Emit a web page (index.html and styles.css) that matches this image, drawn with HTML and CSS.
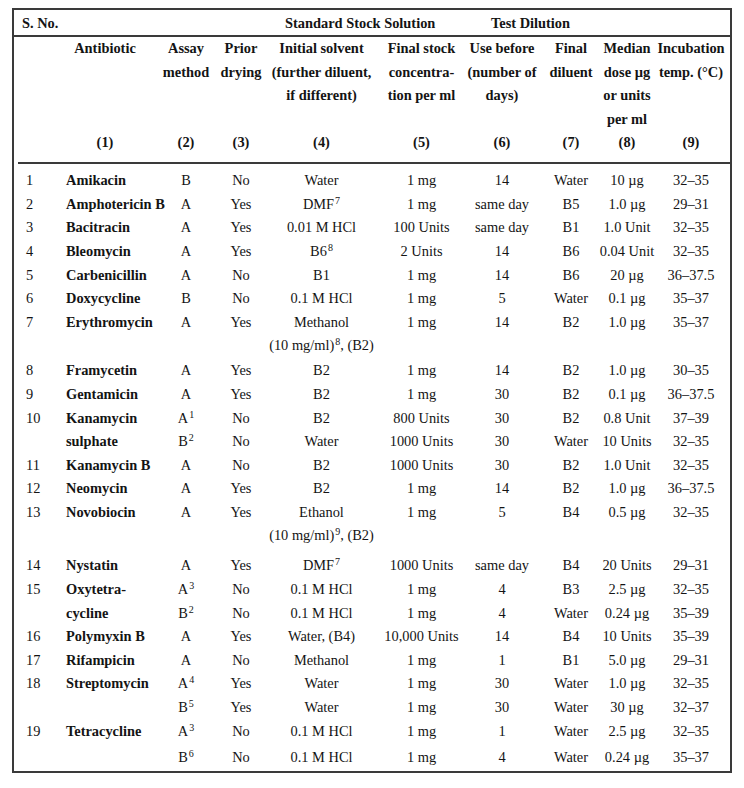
FILE: index.html
```html
<!DOCTYPE html>
<html lang="en">
<head>
<meta charset="utf-8">
<title>Antibiotic assay table</title>
<link rel="stylesheet" href="styles.css">
</head>
<body>
<div class="sheet">
  <div class="cols cap">
    <span class="cap-sno">S. No.</span>
    <span class="cap-std">Standard Stock Solution</span>
    <span class="cap-test">Test Dilution</span>
  </div>
  <div class="cols heads">
    <div class="h"><span></span><span></span></div>
    <div class="h h1"><span>Antibiotic</span><span>(1)</span></div>
    <div class="h"><span>Assay<br>method</span><span>(2)</span></div>
    <div class="h"><span>Prior<br>drying</span><span>(3)</span></div>
    <div class="h"><span>Initial solvent<br>(further diluent,<br>if different)</span><span>(4)</span></div>
    <div class="h"><span>Final stock<br>concentra-<br>tion per ml</span><span>(5)</span></div>
    <div class="h"><span>Use before<br>(number of<br>days)</span><span>(6)</span></div>
    <div class="h"><span>Final<br>diluent</span><span>(7)</span></div>
    <div class="h"><span>Median<br>dose µg<br>or units<br>per ml</span><span>(8)</span></div>
    <div class="h h9"><span>Incubation<br>temp. (°C)</span><span>(9)</span></div>
  </div>
  <div class="rule"></div>
  <div class="rows">
    <div class="cols row"><span class="no">1</span><span class="name">Amikacin</span><span>B</span><span>No</span><span>Water</span><span>1 mg</span><span>14</span><span>Water</span><span>10 µg</span><span class="temp">32–35</span></div>
    <div class="cols row"><span class="no">2</span><span class="name">Amphotericin B</span><span>A</span><span>Yes</span><span>DMF<sup>7</sup></span><span>1 mg</span><span>same day</span><span>B5</span><span>1.0 µg</span><span class="temp">29–31</span></div>
    <div class="cols row"><span class="no">3</span><span class="name">Bacitracin</span><span>A</span><span>Yes</span><span>0.01 M HCl</span><span>100 Units</span><span>same day</span><span>B1</span><span>1.0 Unit</span><span class="temp">32–35</span></div>
    <div class="cols row"><span class="no">4</span><span class="name">Bleomycin</span><span>A</span><span>Yes</span><span>B6<sup>8</sup></span><span>2 Units</span><span>14</span><span>B6</span><span>0.04 Unit</span><span class="temp">32–35</span></div>
    <div class="cols row"><span class="no">5</span><span class="name">Carbenicillin</span><span>A</span><span>No</span><span>B1</span><span>1 mg</span><span>14</span><span>B6</span><span>20 µg</span><span class="temp">36–37.5</span></div>
    <div class="cols row"><span class="no">6</span><span class="name">Doxycycline</span><span>B</span><span>No</span><span>0.1 M HCl</span><span>1 mg</span><span>5</span><span>Water</span><span>0.1 µg</span><span class="temp">35–37</span></div>
    <div class="cols row"><span class="no">7</span><span class="name">Erythromycin</span><span>A</span><span>Yes</span><span>Methanol</span><span>1 mg</span><span>14</span><span>B2</span><span>1.0 µg</span><span class="temp">35–37</span></div>
    <div class="cols row gap-s"><span class="no"></span><span class="name"></span><span></span><span></span><span>(10 mg/ml)<sup>8</sup>, (B2)</span><span></span><span></span><span></span><span></span><span class="temp"></span></div>
    <div class="cols row"><span class="no">8</span><span class="name">Framycetin</span><span>A</span><span>Yes</span><span>B2</span><span>1 mg</span><span>14</span><span>B2</span><span>1.0 µg</span><span class="temp">30–35</span></div>
    <div class="cols row"><span class="no">9</span><span class="name">Gentamicin</span><span>A</span><span>Yes</span><span>B2</span><span>1 mg</span><span>30</span><span>B2</span><span>0.1 µg</span><span class="temp">36–37.5</span></div>
    <div class="cols row"><span class="no">10</span><span class="name">Kanamycin</span><span>A<sup>1</sup></span><span>No</span><span>B2</span><span>800 Units</span><span>30</span><span>B2</span><span>0.8 Unit</span><span class="temp">37–39</span></div>
    <div class="cols row"><span class="no"></span><span class="name">sulphate</span><span>B<sup>2</sup></span><span>No</span><span>Water</span><span>1000 Units</span><span>30</span><span>Water</span><span>10 Units</span><span class="temp">32–35</span></div>
    <div class="cols row"><span class="no">11</span><span class="name">Kanamycin B</span><span>A</span><span>No</span><span>B2</span><span>1000 Units</span><span>30</span><span>B2</span><span>1.0 Unit</span><span class="temp">32–35</span></div>
    <div class="cols row"><span class="no">12</span><span class="name">Neomycin</span><span>A</span><span>Yes</span><span>B2</span><span>1 mg</span><span>14</span><span>B2</span><span>1.0 µg</span><span class="temp">36–37.5</span></div>
    <div class="cols row"><span class="no">13</span><span class="name">Novobiocin</span><span>A</span><span>Yes</span><span>Ethanol</span><span>1 mg</span><span>5</span><span>B4</span><span>0.5 µg</span><span class="temp">32–35</span></div>
    <div class="cols row gap-l"><span class="no"></span><span class="name"></span><span></span><span></span><span>(10 mg/ml)<sup>9</sup>, (B2)</span><span></span><span></span><span></span><span></span><span class="temp"></span></div>
    <div class="cols row"><span class="no">14</span><span class="name">Nystatin</span><span>A</span><span>Yes</span><span>DMF<sup>7</sup></span><span>1000 Units</span><span>same day</span><span>B4</span><span>20 Units</span><span class="temp">29–31</span></div>
    <div class="cols row"><span class="no">15</span><span class="name">Oxytetra-</span><span>A<sup>3</sup></span><span>No</span><span>0.1 M HCl</span><span>1 mg</span><span>4</span><span>B3</span><span>2.5 µg</span><span class="temp">32–35</span></div>
    <div class="cols row"><span class="no"></span><span class="name">cycline</span><span>B<sup>2</sup></span><span>No</span><span>0.1 M HCl</span><span>1 mg</span><span>4</span><span>Water</span><span>0.24 µg</span><span class="temp">35–39</span></div>
    <div class="cols row"><span class="no">16</span><span class="name">Polymyxin B</span><span>A</span><span>Yes</span><span>Water, (B4)</span><span>10,000 Units</span><span>14</span><span>B4</span><span>10 Units</span><span class="temp">35–39</span></div>
    <div class="cols row"><span class="no">17</span><span class="name">Rifampicin</span><span>A</span><span>No</span><span>Methanol</span><span>1 mg</span><span>1</span><span>B1</span><span>5.0 µg</span><span class="temp">29–31</span></div>
    <div class="cols row"><span class="no">18</span><span class="name">Streptomycin</span><span>A<sup>4</sup></span><span>Yes</span><span>Water</span><span>1 mg</span><span>30</span><span>Water</span><span>1.0 µg</span><span class="temp">32–35</span></div>
    <div class="cols row"><span class="no"></span><span class="name"></span><span>B<sup>5</sup></span><span>Yes</span><span>Water</span><span>1 mg</span><span>30</span><span>Water</span><span>30 µg</span><span class="temp">32–37</span></div>
    <div class="cols row"><span class="no">19</span><span class="name">Tetracycline</span><span>A<sup>3</sup></span><span>No</span><span>0.1 M HCl</span><span>1 mg</span><span>1</span><span>Water</span><span>2.5 µg</span><span class="temp">32–35</span></div>
    <div class="cols row last"><span class="no"></span><span class="name"></span><span>B<sup>6</sup></span><span>No</span><span>0.1 M HCl</span><span>1 mg</span><span>4</span><span>Water</span><span>0.24 µg</span><span class="temp">35–37</span></div>
  </div>
</div>
</body>
</html>
```

FILE: styles.css
```css
* {
  box-sizing: border-box;
}

body {
  margin: 0;
  background: #ffffff;
  font-family: "Liberation Serif", "Times New Roman", serif;
  font-size: 14.4px;
  color: #141414;
}

.sheet {
  width: 720px;
  margin: 8px 0 0 12px;
  border: 2px solid #3a3a3a;
  padding-bottom: 1px;
}

.cols {
  display: grid;
  grid-template-columns: 48px 96px 56px 54px 107px 93px 68px 70px 42px 82px;
}

.cap {
  height: 27px;
  line-height: 26px;
  font-weight: bold;
  border-bottom: 2px solid #3a3a3a;
  white-space: nowrap;
}

.cap-sno {
  grid-column: 1 / 3;
  padding-left: 8px;
}

.cap-std {
  grid-column: 5 / 7;
  padding-left: 17px;
}

.cap-test {
  grid-column: 7 / 9;
  padding-left: 23px;
}

.heads {
  font-weight: bold;
  line-height: 23.5px;
}

.h {
  height: 117.5px;
  display: flex;
  flex-direction: column;
  justify-content: space-between;
  align-items: center;
  text-align: center;
  white-space: nowrap;
}

.h1 {
  padding-right: 10px;
}

.h9 {
  padding-left: 4px;
}

.rule {
  height: 2px;
  margin: 7.5px 0 0 4px;
  background: #3a3a3a;
}

.rows {
  padding-top: 5.2px;
  line-height: 23.6px;
}

.row {
  justify-items: center;
  white-space: nowrap;
}

.row > .no {
  justify-self: start;
  padding-left: 12px;
}

.row > .name {
  justify-self: start;
  padding-left: 4px;
  font-weight: bold;
}

.row > .temp {
  padding-left: 4px;
}

.gap-s {
  margin-bottom: 1.4px;
}

.gap-l {
  margin-bottom: 6.4px;
}

.last {
  margin-top: 3.2px;
}

sup {
  font-size: 10px;
  line-height: 0;
  vertical-align: 5px;
  margin-left: 1px;
}
```
